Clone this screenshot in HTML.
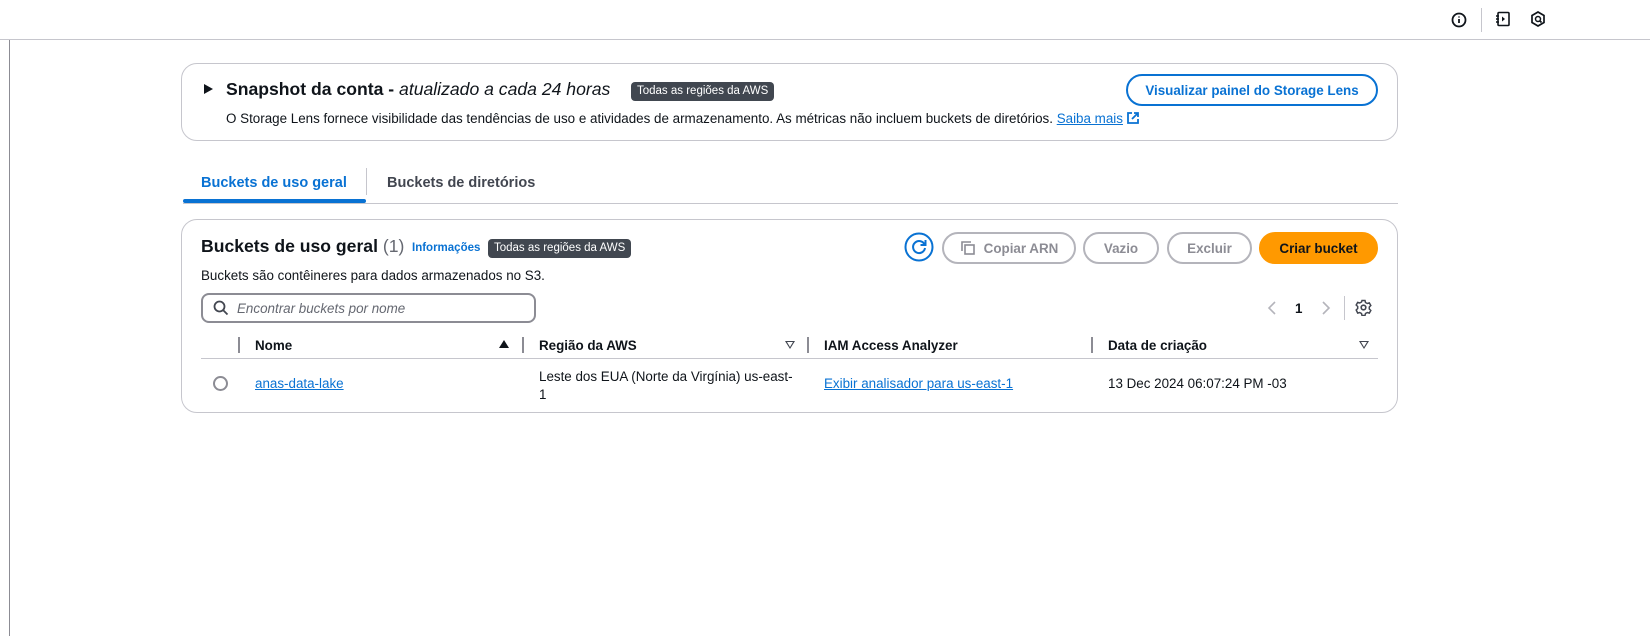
<!DOCTYPE html>
<html><head><meta charset="utf-8"><style>
*{box-sizing:border-box;margin:0;padding:0}
body{width:1650px;height:636px;background:#fff;font-family:"Liberation Sans",sans-serif;color:#0f141a;position:relative;overflow:hidden;font-size:13.4px}
.a{position:absolute;white-space:nowrap}
.badge{background:#414750;color:#fff;font-size:11.5px;border-radius:4px;padding:2px 6px;line-height:15px}
.btn{position:absolute;height:32px;border:2px solid #b4b4bb;border-radius:16px;color:#8c8c94;font-weight:bold;font-size:13.4px;display:flex;align-items:center;justify-content:center}
.link{color:#0972d3;text-decoration:underline}
.th{font-weight:bold;font-size:13.4px}
.sep{position:absolute;width:2px;height:16px;background:#8c8c94}
</style></head><body>
<div class="a" style="left:0;top:39px;width:1650px;height:1px;background:#c6c6cd"></div>
<div class="a" style="left:9px;top:40px;width:1px;height:596px;background:#8c8c94"></div>
<div class="a" style="left:1481px;top:8px;width:1px;height:24px;background:#c6c6cd"></div>
<svg class="a" style="left:1450px;top:11px" width="18" height="18" viewBox="0 0 18 18"><circle cx="9" cy="9" r="6.5" fill="none" stroke="#0f141a" stroke-width="1.8"/><path d="M9 8v4M9 5.5v1" stroke="#0f141a" stroke-width="1.8"/></svg>
<svg class="a" style="left:1494px;top:10px" width="18" height="18" viewBox="0 0 18 18"><rect x="4" y="2.5" width="11" height="13" rx="1" fill="none" stroke="#0f141a" stroke-width="1.6"/><path d="M2 6h3M2 9h3M2 12h3" stroke="#0f141a" stroke-width="1.6"/><path d="M8 6.5l3 2.5-3 2.5z" fill="#0f141a"/></svg>
<svg class="a" style="left:1529px;top:10px" width="18" height="18" viewBox="0 0 18 18"><path d="M9 2l6 3.5v7L9 16l-6-3.5v-7z" fill="none" stroke="#0f141a" stroke-width="1.7"/><circle cx="9" cy="9" r="2.5" fill="none" stroke="#0f141a" stroke-width="1.5"/><path d="M10.5 10.5l2 2" stroke="#0f141a" stroke-width="1.7"/></svg>

<div class="a" style="left:181px;top:63px;width:1217px;height:78px;border:1px solid #c6c6cd;border-radius:16px"></div>
<div class="a" style="left:204px;top:84px;width:0;height:0;border-left:9px solid #0f141a;border-top:5px solid transparent;border-bottom:5px solid transparent"></div>
<div class="a" style="left:226px;top:79px;font-size:17.6px;font-weight:bold">Snapshot da conta - <i style="font-weight:normal">atualizado a cada 24 horas</i></div>
<div class="a badge" style="left:631px;top:82px">Todas as regiões da AWS</div>
<div class="a" style="left:226px;top:111px">O Storage Lens fornece visibilidade das tendências de uso e atividades de armazenamento. As métricas não incluem buckets de diretórios. <span class="link">Saiba mais</span></div>
<svg class="a" style="left:1126px;top:111px" width="14" height="14" viewBox="0 0 14 14"><path d="M6 2H2v10h10V8M8 2h4v4M12 2L6 8" fill="none" stroke="#0972d3" stroke-width="1.8"/></svg>
<div class="btn" style="left:1126px;top:74px;width:252px;border-color:#0972d3;color:#0972d3">Visualizar painel do Storage Lens</div>

<div class="a" style="left:201px;top:175px;font-size:14.5px;font-weight:bold;color:#0972d3">Buckets de uso geral</div>
<div class="a" style="left:183px;top:199px;width:183px;height:4px;background:#0972d3;border-radius:2px"></div>
<div class="a" style="left:366px;top:168px;width:1px;height:27px;background:#c6c6cd"></div>
<div class="a" style="left:387px;top:175px;font-size:14.5px;font-weight:bold;color:#424650">Buckets de diretórios</div>
<div class="a" style="left:183px;top:203px;width:1215px;height:1px;background:#c6c6cd"></div>

<div class="a" style="left:181px;top:219px;width:1217px;height:194px;border:1px solid #c6c6cd;border-radius:16px"></div>
<div class="a" style="left:201px;top:236px;font-size:17.6px;font-weight:bold">Buckets de uso geral <span style="font-weight:normal;color:#656871">(1)</span></div>
<div class="a" style="left:412px;top:242px;font-size:11.5px;font-weight:bold;color:#0972d3">Informações</div>
<div class="a badge" style="left:488px;top:239px">Todas as regiões da AWS</div>
<div class="a" style="left:201px;top:268px">Buckets são contêineres para dados armazenados no S3.</div>
<svg class="a" style="left:904px;top:232px" width="30" height="30" viewBox="0 0 30 30"><circle cx="15" cy="15" r="13.5" fill="none" stroke="#0972d3" stroke-width="2"/><path d="M20.5 12.5A6 6 0 1 0 21 16" fill="none" stroke="#0972d3" stroke-width="2"/><path d="M21.5 8v5h-5" fill="none" stroke="#0972d3" stroke-width="2"/></svg>
<div class="btn" style="left:942px;top:232px;width:134px"><svg width="16" height="16" viewBox="0 0 16 16" style="margin-right:8px"><path d="M2 11V2h9" fill="none" stroke="#8c8c94" stroke-width="1.6"/><rect x="5" y="5" width="9" height="9" fill="none" stroke="#8c8c94" stroke-width="1.6"/></svg>Copiar ARN</div>
<div class="btn" style="left:1083px;top:232px;width:76px">Vazio</div>
<div class="btn" style="left:1167px;top:232px;width:85px">Excluir</div>
<div class="btn" style="left:1259px;top:232px;width:119px;background:#ff9900;border-color:#ff9900;color:#0f141a">Criar bucket</div>

<div class="a" style="left:201px;top:293px;width:335px;height:30px;border:2px solid #8c8c94;border-radius:8px"></div>
<svg class="a" style="left:213px;top:300px" width="16" height="16" viewBox="0 0 16 16"><circle cx="6.5" cy="6.5" r="5" fill="none" stroke="#424650" stroke-width="1.8"/><path d="M10 10l4.5 4.5" stroke="#424650" stroke-width="1.8"/></svg>
<div class="a" style="left:237px;top:301px;font-style:italic;color:#656871">Encontrar buckets por nome</div>
<svg class="a" style="left:1266px;top:301px" width="12" height="14" viewBox="0 0 12 14"><path d="M9 1L3 7l6 6" fill="none" stroke="#b4b4bb" stroke-width="1.6"/></svg>
<div class="a" style="left:1295px;top:301px;font-weight:bold">1</div>
<svg class="a" style="left:1320px;top:301px" width="12" height="14" viewBox="0 0 12 14"><path d="M3 1l6 6-6 6" fill="none" stroke="#b4b4bb" stroke-width="1.6"/></svg>
<div class="a" style="left:1344px;top:296px;width:1px;height:24px;background:#c6c6cd"></div>
<svg class="a" style="left:1355px;top:299px" width="17" height="17" viewBox="0 0 17 17"><circle cx="8.5" cy="8.5" r="2.3" fill="none" stroke="#424650" stroke-width="1.6"/><path d="M7 1.5h3l.5 2 1.8 1 2-.6 1.5 2.6-1.5 1.5v2l1.5 1.5-1.5 2.6-2-.6-1.8 1-.5 2H7l-.5-2-1.8-1-2 .6L1.2 11l1.5-1.5v-2L1.2 6l1.5-2.6 2 .6 1.8-1z" fill="none" stroke="#424650" stroke-width="1.5"/></svg>

<div class="sep" style="left:238px;top:337px"></div>
<div class="a th" style="left:255px;top:338px">Nome</div>
<div class="a" style="left:499px;top:340px;width:0;height:0;border-bottom:8px solid #0f141a;border-left:5px solid transparent;border-right:5px solid transparent"></div>
<div class="sep" style="left:522px;top:337px"></div>
<div class="a th" style="left:539px;top:338px">Região da AWS</div>
<div class="a" style="left:785px;top:341px;width:0;height:0;border-top:8px solid #424650;border-left:5px solid transparent;border-right:5px solid transparent"></div>
<div class="a" style="left:786.5px;top:342px;width:0;height:0;border-top:5px solid #fff;border-left:3px solid transparent;border-right:3px solid transparent"></div>
<div class="sep" style="left:807px;top:337px"></div>
<div class="a th" style="left:824px;top:338px">IAM Access Analyzer</div>
<div class="sep" style="left:1091px;top:337px"></div>
<div class="a th" style="left:1108px;top:338px">Data de criação</div>
<div class="a" style="left:1359px;top:341px;width:0;height:0;border-top:8px solid #424650;border-left:5px solid transparent;border-right:5px solid transparent"></div>
<div class="a" style="left:1360.5px;top:342px;width:0;height:0;border-top:5px solid #fff;border-left:3px solid transparent;border-right:3px solid transparent"></div>
<div class="a" style="left:201px;top:358px;width:1177px;height:1px;background:#c6c6cd"></div>

<div class="a" style="left:213px;top:376px;width:15px;height:15px;border:2px solid #8c8c94;border-radius:50%"></div>
<div class="a link" style="left:255px;top:376px">anas-data-lake</div>
<div class="a" style="left:539px;top:368px;line-height:18px">Leste dos EUA (Norte da Virgínia) us-east-<br>1</div>
<div class="a link" style="left:824px;top:376px">Exibir analisador para us-east-1</div>
<div class="a" style="left:1108px;top:376px">13 Dec 2024 06:07:24 PM -03</div>
</body></html>
